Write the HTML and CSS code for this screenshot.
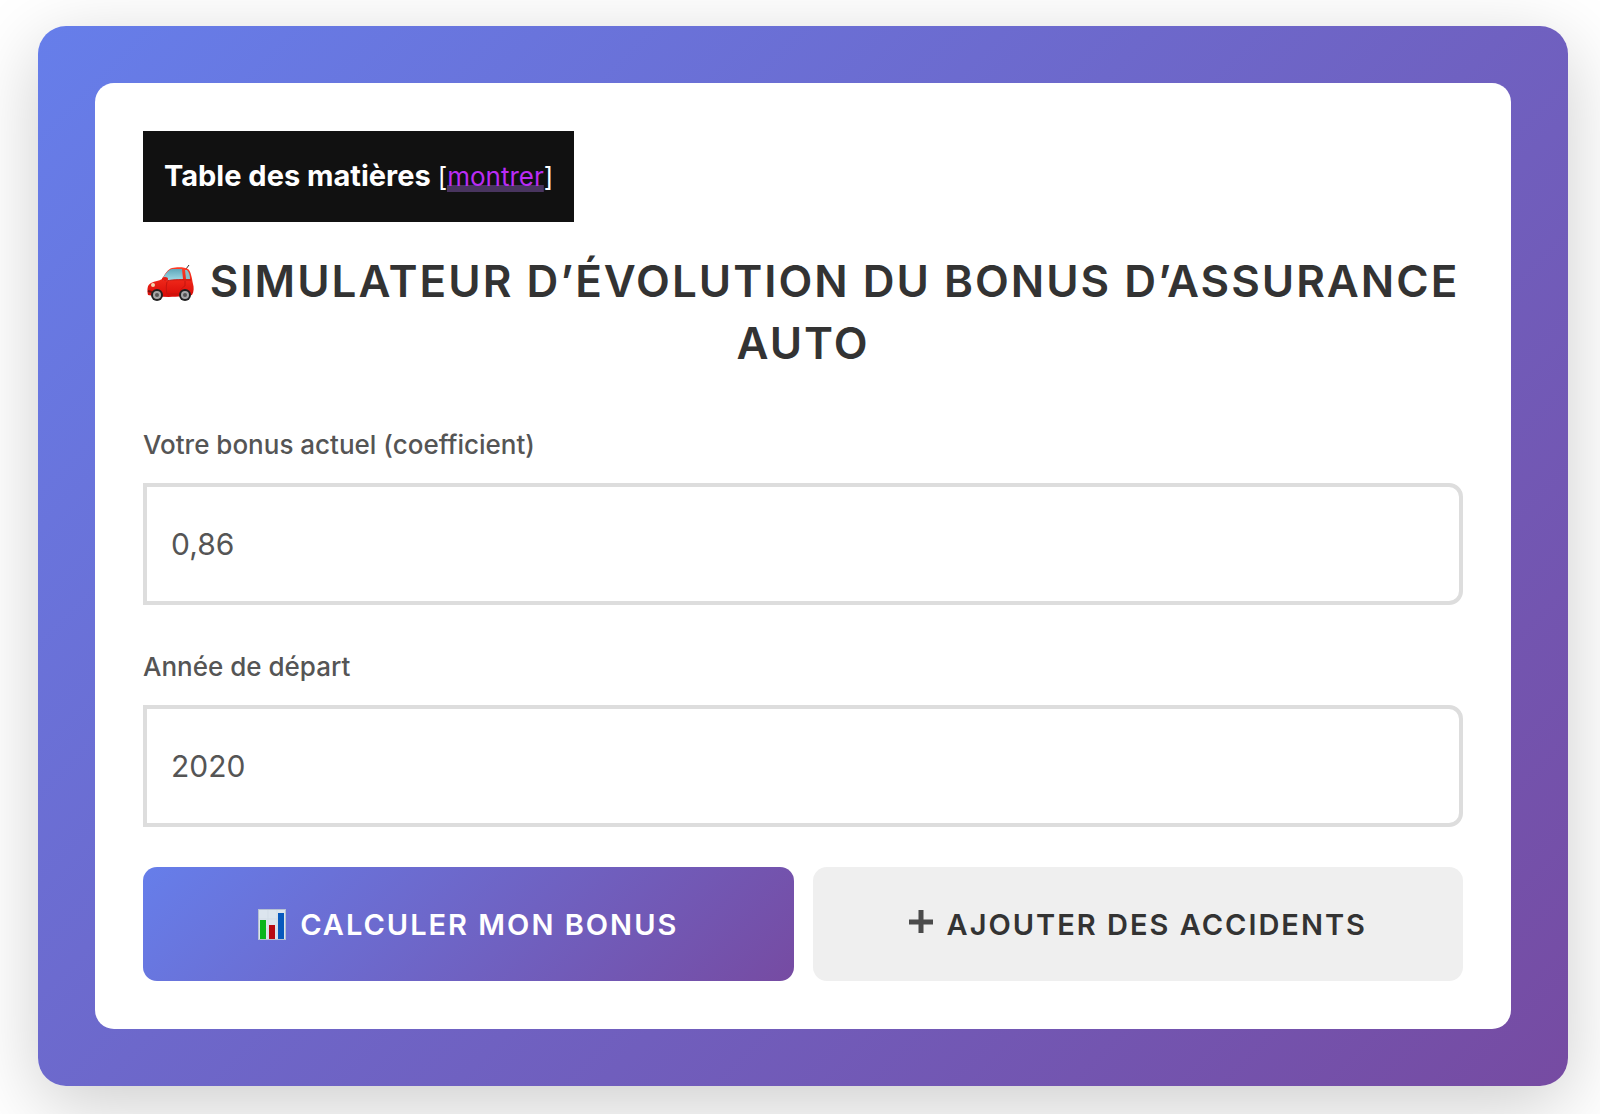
FILE: index.html
```
<!DOCTYPE html>
<html lang="fr">
<head>
    <meta charset="UTF-8">
    <meta name="viewport" content="width=device-width, initial-scale=1.0">
    <title>Simulateur de bonus auto</title>
    <link rel="stylesheet" href="styles.css">
</head>
<body>
    <main class="simulator">
        <form class="card">
            <nav class="toc">
                <strong class="toc-title">Table des matières</strong>
                <span class="toc-toggle">[<a href="#titre">montrer</a>]</span>
            </nav>

            <h1 class="title" id="titre">
                <svg class="icon-car" viewBox="0 0 48 38" aria-hidden="true">
                    <defs>
                        <linearGradient id="carBody" x1="0" y1="0" x2="0" y2="1">
                            <stop offset="0" stop-color="#ff3b25"/>
                            <stop offset="1" stop-color="#d80b08"/>
                        </linearGradient>
                        <linearGradient id="carGlass" x1="0" y1="0" x2="0" y2="1">
                            <stop offset="0" stop-color="#5fa8bb"/>
                            <stop offset="1" stop-color="#a5dce8"/>
                        </linearGradient>
                    </defs>
                    <path d="M39 5l3-4" stroke="#333" stroke-width="1"/>
                    <path d="M1 31c-1-5-1-10 3-12 4-2 8-2 11-4 3-5 6-10 10-11 5-1 13-1 16 1 3 2 4 10 5 15 1 3 1 8-1 11-9 2-32 3-44 0z" fill="url(#carBody)"/>
                    <path d="M16 14c2-4 5-8 9-9h10l1 10-20 2z" fill="url(#carGlass)"/>
                    <path d="M38 6h2c2 2 3 5 3 9h-4z" fill="#86bfc9"/>
                    <path d="M20 17c6-2 16-1 24-1" fill="none" stroke="#c4150f" stroke-width="1"/>
                    <path d="M20 18c-1 4-1 8 0 12h13c0-5 3-7 5-8V17" fill="none" stroke="#c4150f" stroke-width="1"/>
                    <ellipse cx="18" cy="15" rx="3" ry="2" fill="#e51b12"/>
                    <ellipse cx="6" cy="21" rx="2" ry="2" fill="#f3d7b1"/>
                    <path d="M1 27l4 1" stroke="#751210" stroke-width="2"/>
                    <circle cx="10" cy="31" r="6" fill="#222"/>
                    <circle cx="10" cy="31" r="4" fill="#a8a8a8"/>
                    <circle cx="10" cy="31" r="2" fill="#555"/>
                    <circle cx="38" cy="31" r="6" fill="#222"/>
                    <circle cx="38" cy="31" r="4" fill="#a8a8a8"/>
                    <circle cx="38" cy="31" r="2" fill="#555"/>
                </svg>
                Simulateur d’évolution du bonus d’assurance auto
            </h1>

            <div class="field">
                <label for="bonus">Votre bonus actuel (coefficient)</label>
                <input type="text" id="bonus" inputmode="decimal" value="0,86">
            </div>
            <div class="field">
                <label for="annee">Année de départ</label>
                <input type="text" id="annee" inputmode="numeric" value="2020">
            </div>

            <div class="actions">
                <button type="button" class="btn btn-primary">
                    <svg class="icon-chart" viewBox="0 0 28 31" aria-hidden="true">
                        <path d="M0 0h28v31H0z" fill="#b5c0d2"/>
                        <path d="M1 1h26v29H1z" fill="#dce5ee"/>
                        <path d="M10 1v29M19 1v29M1 10h26M1 20h26" stroke="#d3dde7"/>
                        <path d="M2 11h6v19H2z" fill="#09b51c"/>
                        <path d="M11 16h6v14h-6z" fill="#b80a12"/>
                        <path d="M20 4h6v26h-6z" fill="#0759bd"/>
                    </svg>
                    Calculer mon bonus
                </button>
                <button type="button" class="btn btn-secondary">
                    <svg class="icon-plus" viewBox="0 0 24 28" aria-hidden="true">
                        <path d="M12 0v23M0 12h24" stroke="#4b4b4b" stroke-width="5"/>
                    </svg>
                    Ajouter des accidents
                </button>
            </div>
        </form>
    </main>
</body>
</html>
```

FILE: styles.css
```
* {
    box-sizing: border-box;
}

body {
    margin: 0;
    padding: 26px 32px 28px 38px;
    background-color: #fff;
    font-family: Inter, "Liberation Sans", sans-serif;
    color: #333;
}

.simulator {
    padding: 57px;
    background: linear-gradient(135deg, #667eea 0%, #764ba2 100%);
    border-radius: 28px;
    box-shadow: 0 19px 76px rgba(0, 0, 0, 0.2);
}

.card {
    padding: 48px;
    background-color: #fff;
    border-radius: 19px;
}

/* Table des matières */
.toc {
    display: flex;
    align-items: baseline;
    gap: 7px;
    width: fit-content;
    padding: 24px 21px;
    background-color: #111;
    color: #fff;
    line-height: 42px;
}

.toc-title {
    font-size: 29px;
    font-weight: 700;
}

.toc-toggle {
    font-size: 26px;
}

.toc a {
    color: #b92cf5;
    text-decoration: none;
    background: linear-gradient(#49355f, #49355f) bottom / 100% 7px no-repeat;
}

.title {
    margin: 28px 0 49px;
    font-size: 44px;
    font-weight: 600;
    line-height: 62px;
    letter-spacing: 2px;
    text-align: center;
    text-transform: uppercase;
}

.icon-car {
    width: 48px;
    height: 38px;
    margin-right: 2px;
    vertical-align: -5px;
}

/* Champs */
.field {
    margin-bottom: 40px;
}

.field label {
    display: block;
    margin-bottom: 16px;
    font-size: 26px;
    font-weight: 500;
    line-height: 44px;
    color: #555;
}

.field input {
    display: block;
    width: 100%;
    height: 122px;
    padding: 0 24px;
    border: 4px solid #ddd;
    border-radius: 0 14px 14px 0;
    background-color: #fff;
    font-family: inherit;
    font-size: 30px;
    color: #555;
}

/* Boutons */
.actions {
    display: grid;
    grid-template-columns: 1fr 1fr;
    gap: 19px;
}

.btn {
    display: flex;
    align-items: center;
    justify-content: center;
    gap: 14px;
    height: 114px;
    padding: 0 24px;
    border: none;
    border-radius: 14px;
    font-family: inherit;
    font-size: 29px;
    font-weight: 600;
    letter-spacing: 2px;
    text-transform: uppercase;
    cursor: pointer;
}

.btn-primary {
    background: linear-gradient(135deg, #667eea 0%, #764ba2 100%);
    color: #fff;
}

.btn-secondary {
    background-color: #efefef;
    color: #333;
}

.icon-chart {
    width: 28px;
    height: 31px;
}

.icon-plus {
    width: 24px;
    height: 28px;
}
```
